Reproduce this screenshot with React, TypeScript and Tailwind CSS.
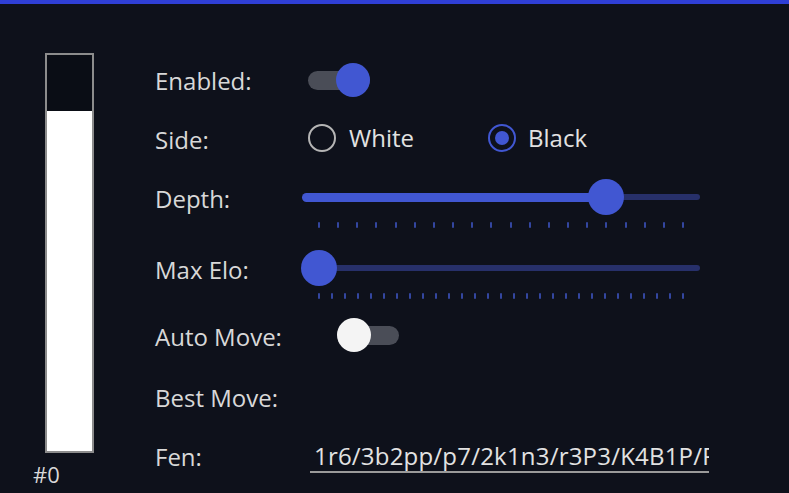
import React from "react";

function Toggle({ on }: { on: boolean }) {
  return (
    <div className="relative flex items-center w-[62px] h-[34px]">
      <div className="w-full h-[19px] rounded-full bg-[#4a4d57]" />
      <div
        className={
          on
            ? "absolute right-0 top-0 w-[34px] h-[34px] rounded-full bg-[#4157d2]"
            : "absolute left-0 top-0 w-[34px] h-[34px] rounded-full bg-[#f4f4f4]"
        }
      />
    </div>
  );
}

function Slider({ frac, ticks }: { frac: number; ticks: number }) {
  const width = 398;
  const inset = 17;
  const center = inset + frac * (width - inset * 2);
  return (
    <div className="flex flex-col w-[398px]">
      <div className="relative h-[36px] flex items-center">
        <div className="flex items-center w-full">
          {frac > 0 && (
            <div className="h-[9px] rounded-l-full bg-[#4157d2]" style={{ width: center }} />
          )}
          <div className="flex-1 h-[6px] rounded-r-full bg-[#27306a]" />
        </div>
        <div
          className="absolute top-0 w-[36px] h-[36px] rounded-full bg-[#4157d2]"
          style={{ left: center - 18 }}
        />
      </div>
      <div className="flex justify-between px-[16px] mt-[7px] h-[6px]">
        {Array.from({ length: ticks }).map((_, i) => (
          <div key={i} className="w-[2px] h-[6px] rounded-full bg-[#3346a0]" />
        ))}
      </div>
    </div>
  );
}

function Radio({ checked }: { checked: boolean }) {
  return checked ? (
    <div className="w-[28px] h-[28px] rounded-full border-[2.5px] border-[#4157d2] flex items-center justify-center">
      <div className="w-[14px] h-[14px] rounded-full bg-[#4157d2]" />
    </div>
  ) : (
    <div className="w-[28px] h-[28px] rounded-full border-[2.5px] border-[#b5b5b5]" />
  );
}

export default function App() {
  const label = "w-[147px] shrink-0 leading-[32px] text-[24px] text-[#d8d8d8]";
  return (
    <div
      className="w-[789px] h-[493px] bg-[#0e111b] overflow-hidden flex flex-col"
      style={{ fontFamily: '"Open Sans", "Noto Sans", sans-serif' }}
    >
      <div className="h-[4px] shrink-0 bg-[#2f3fd6]" />
      <div className="flex">
        <div className="flex flex-col ml-[33px] w-[61px] pt-[49px]">
          <div className="ml-[12px] w-[49px] h-[400px] border-2 border-[#8c8c8c] flex flex-col">
            <div className="h-[56px] bg-[#0a0d15]" />
            <div className="flex-1 bg-white" />
          </div>
          <div className="mt-[6px] text-[22px] leading-[30px] text-[#d8d8d8]">#0</div>
        </div>
        <div className="ml-[61px] pt-[61px] flex flex-col">
          <div className="flex items-start h-[59px]">
            <div className={label}>Enabled:</div>
            <div className="ml-[6px] mt-[-2px]">
              <Toggle on={true} />
            </div>
          </div>
          <div className="flex items-start h-[59px]">
            <div className={label}>Side:</div>
            <div className="ml-[6px] flex items-start">
              <div className="flex items-start w-[180px]">
                <Radio checked={false} />
                <span className="ml-[13px] leading-[32px] text-[24px] text-[#e2e2e2] mt-[-2px]">White</span>
              </div>
              <div className="flex items-start">
                <Radio checked={true} />
                <span className="ml-[12px] leading-[32px] text-[24px] text-[#e2e2e2] mt-[-2px]">Black</span>
              </div>
            </div>
          </div>
          <div className="flex items-start h-[71px]">
            <div className={label}>Depth:</div>
            <div className="mt-[-4px]">
              <Slider frac={15 / 19} ticks={20} />
            </div>
          </div>
          <div className="flex items-start h-[67px]">
            <div className={label}>Max Elo:</div>
            <div className="mt-[-4px]">
              <Slider frac={0} ticks={29} />
            </div>
          </div>
          <div className="flex items-start h-[61px]">
            <div className={label}>Auto Move:</div>
            <div className="ml-[35px] mt-[-3px]">
              <Toggle on={false} />
            </div>
          </div>
          <div className="flex items-start h-[59px]">
            <div className={label}>Best Move:</div>
          </div>
          <div className="flex items-start">
            <div className={label}>Fen:</div>
            <div className="ml-[8px] w-[399px] h-[32px] border-b-2 border-[#9a9a9a] overflow-hidden whitespace-nowrap pl-[4px] leading-[30px] text-[24px] tracking-[0.2px] text-[#e2e2e2]">
              1r6/3b2pp/p7/2k1n3/r3P3/K4B1P/R7 b - - 3 41
            </div>
          </div>
        </div>
      </div>
    </div>
  );
}
